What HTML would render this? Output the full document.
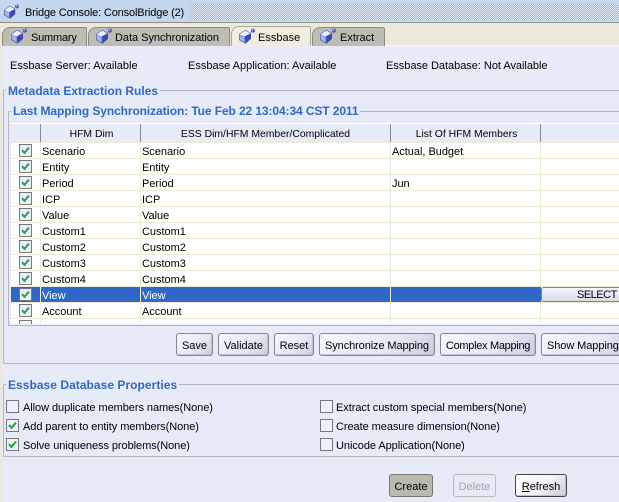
<!DOCTYPE html>
<html><head><meta charset="utf-8">
<style>
html,body{margin:0;padding:0;width:619px;height:502px;overflow:hidden;background:#e6ebf7;font-family:"Liberation Sans",sans-serif;font-size:11px;color:#000}
div,span{position:absolute;box-sizing:border-box;white-space:nowrap}
svg{position:absolute;overflow:visible}
.t{line-height:14px;height:14px}
.r{letter-spacing:-.03px}
.l{letter-spacing:-.06px}
.tab{top:27px;height:19px;background:#bdbdb4;border:1px solid #8a8a84;border-bottom:none;border-radius:8px 2px 0 0}
.h{color:#3068c8;font-weight:bold;font-size:12px;line-height:14px;height:14px;background:#e6ebf7;padding:0 2px}
.g{border:1px solid #b4b6b9;border-radius:1px}
.btn{top:333px;height:23px;border:1px solid #86868e;border-radius:3px;background:linear-gradient(135deg,#f4f6fc 0%,#e6e9f4 60%,#c8cbda 100%);text-align:center;line-height:24px;box-shadow:inset -1px -1px 0 #c0c2cf}
.cb{width:13px;height:13px;border:1px solid #77777f;background:#eef0f9}
.row{left:11px;width:608px;height:16px;background:#fff;border-bottom:1px solid #efe9d6}
.vl{width:1px;background:#efe9d6;top:143px;height:180px}
.hc{top:124px;height:19px;border-right:1px solid #8a8a8a;text-align:center;line-height:21px;background:#e6ebf7;font-size:10.4px}
</style></head><body>
<svg width="0" height="0" style="position:absolute"><defs>
<symbol id="cube" viewBox="0 0 15 15">
<path d="M0 6 L6 2 L11 5 L11 10 L6 14.5 L0 11Z" fill="#7a86dc" stroke="#4a52a8" stroke-width=".5"/>
<path d="M.5 6 L6 2.5 L10.5 5 L5 8Z" fill="#eef0ff"/>
<path d="M5.5 8 L11 5 L11 10 L6 14.5Z" fill="#3b48b4"/>
<path d="M1 7 L5 8.5 L5 13 L1 11Z" fill="#a8b4f0"/>
<circle cx="13" cy="2.5" r="1.9" fill="#4658c0"/><circle cx="12.6" cy="2" r=".7" fill="#d8defc"/>
</symbol>
<symbol id="chk" viewBox="0 0 9 8"><path d="M1 3.6 L3.5 6.4 L8 1" fill="none" stroke="#24a83c" stroke-width="2.1"/></symbol>
</defs></svg>

<div style="left:0;top:0;width:619px;height:22px;background:#c5d6ef"></div>
<div style="left:190px;top:4px;width:429px;height:16px;background:repeating-conic-gradient(#9db8e2 0 25%,#dfe8f6 0 50%) 0 0/2px 2px"></div>
<div style="left:0;top:22px;width:619px;height:1px;background:#8f8f8a"></div>
<svg style="left:4px;top:4px" width="15" height="15"><use href="#cube"/></svg>
<div class="t" style="left:25px;top:6px;letter-spacing:-.15px">Bridge Console: ConsolBridge (2)</div>

<div style="left:0;top:23px;width:619px;height:23px;background:#ede9da"></div>
<div style="left:0;top:45px;width:619px;height:1px;background:#fbfaf1"></div>
<div style="left:0;top:46px;width:2px;height:456px;background:#ede9da"></div>

<div class="tab" style="left:2px;width:85px"></div>
<svg style="left:11px;top:28px" width="16" height="16"><use href="#cube"/></svg>
<div class="t" style="left:31px;top:31px;letter-spacing:-.2px">Summary</div>
<div class="tab" style="left:88px;width:142px"></div>
<svg style="left:96px;top:28px" width="16" height="16"><use href="#cube"/></svg>
<div class="t" style="left:115px;top:31px;letter-spacing:-.03px">Data Synchronization</div>
<div class="tab" style="left:231px;top:26px;width:80px;height:20px;background:#f0eddf;border-color:#a8a89f"></div>
<svg style="left:239px;top:28px" width="16" height="16"><use href="#cube"/></svg>
<div class="t" style="left:258px;top:31px">Essbase</div>
<div class="tab" style="left:312px;width:73px"></div>
<svg style="left:320px;top:28px" width="16" height="16"><use href="#cube"/></svg>
<div class="t" style="left:340px;top:31px">Extract</div>

<div class="t" style="left:10px;top:59px">Essbase Server: Available</div>
<div class="t" style="left:188px;top:59px">Essbase Application: Available</div>
<div class="t" style="left:386px;top:59px;letter-spacing:-.03px">Essbase Database: Not Available</div>

<div class="g" style="left:3px;top:90px;width:640px;height:274px"></div>
<div class="h" style="left:6px;top:84px">Metadata Extraction Rules</div>
<div class="g" style="left:8px;top:111px;width:640px;height:215px"></div>
<div class="h" style="left:11px;top:104px;letter-spacing:-.1px">Last Mapping Synchronization: Tue Feb 22 13:04:34 CST 2011</div>

<div style="left:11px;top:123px;width:608px;height:1px;background:#fff"></div>
<div class="hc" style="left:11px;width:30px"></div>
<div class="hc" style="left:41px;width:100px;padding-left:2px">HFM Dim</div>
<div class="hc" style="left:141px;width:250px">ESS Dim/HFM Member/Complicated</div>
<div class="hc" style="left:391px;width:150px;padding-left:2px">List Of HFM Members</div>
<div class="hc" style="left:541px;width:78px;border-right:none"></div>
<div style="left:11px;top:142px;width:608px;height:1px;background:#efe9d6"></div>

<div class="row" style="top:143px"></div>
<div class="row" style="top:159px"></div>
<div class="row" style="top:175px"></div>
<div class="row" style="top:191px"></div>
<div class="row" style="top:207px"></div>
<div class="row" style="top:223px"></div>
<div class="row" style="top:239px"></div>
<div class="row" style="top:255px"></div>
<div class="row" style="top:271px"></div>
<div class="row" style="top:287px"></div>
<div class="row" style="top:303px"></div>
<div class="row" style="top:319px;height:5px;border:none"></div>

<div class="vl" style="left:40px"></div>
<div class="vl" style="left:140px"></div>
<div class="vl" style="left:390px"></div>
<div class="vl" style="left:540px"></div>

<div style="left:11px;top:287px;width:530px;height:15px;background:#3068c8"></div>
<div style="left:40px;top:287px;width:1px;height:15px;background:#efe9d6"></div>
<div style="left:140px;top:287px;width:1px;height:15px;background:#efe9d6"></div>
<div style="left:390px;top:287px;width:1px;height:15px;background:#efe9d6"></div>

<div class="cb" style="left:19px;top:144px"><svg style="left:1px;top:1px" width="9" height="9"><use href="#chk"/></svg></div>
<div class="cb" style="left:19px;top:160px"><svg style="left:1px;top:1px" width="9" height="9"><use href="#chk"/></svg></div>
<div class="cb" style="left:19px;top:176px"><svg style="left:1px;top:1px" width="9" height="9"><use href="#chk"/></svg></div>
<div class="cb" style="left:19px;top:192px"><svg style="left:1px;top:1px" width="9" height="9"><use href="#chk"/></svg></div>
<div class="cb" style="left:19px;top:208px"><svg style="left:1px;top:1px" width="9" height="9"><use href="#chk"/></svg></div>
<div class="cb" style="left:19px;top:224px"><svg style="left:1px;top:1px" width="9" height="9"><use href="#chk"/></svg></div>
<div class="cb" style="left:19px;top:240px"><svg style="left:1px;top:1px" width="9" height="9"><use href="#chk"/></svg></div>
<div class="cb" style="left:19px;top:256px"><svg style="left:1px;top:1px" width="9" height="9"><use href="#chk"/></svg></div>
<div class="cb" style="left:19px;top:272px"><svg style="left:1px;top:1px" width="9" height="9"><use href="#chk"/></svg></div>
<div class="cb" style="left:19px;top:288px"><svg style="left:1px;top:1px" width="9" height="9"><use href="#chk"/></svg></div>
<div class="cb" style="left:19px;top:304px"><svg style="left:1px;top:1px" width="9" height="9"><use href="#chk"/></svg></div>
<div style="left:19px;top:320px;width:13px;height:4px;border:1px solid #77777f;border-bottom:none;background:#f4f5fb"></div>

<div class="t r" style="left:42px;top:145px">Scenario</div><div class="t r" style="left:142px;top:145px">Scenario</div><div class="t r" style="left:392px;top:145px">Actual, Budget</div>
<div class="t r" style="left:42px;top:161px">Entity</div><div class="t r" style="left:142px;top:161px">Entity</div>
<div class="t r" style="left:42px;top:177px">Period</div><div class="t r" style="left:142px;top:177px">Period</div><div class="t r" style="left:392px;top:177px">Jun</div>
<div class="t r" style="left:42px;top:193px">ICP</div><div class="t r" style="left:142px;top:193px">ICP</div>
<div class="t r" style="left:42px;top:209px">Value</div><div class="t r" style="left:142px;top:209px">Value</div>
<div class="t r" style="left:42px;top:225px">Custom1</div><div class="t r" style="left:142px;top:225px">Custom1</div>
<div class="t r" style="left:42px;top:241px">Custom2</div><div class="t r" style="left:142px;top:241px">Custom2</div>
<div class="t r" style="left:42px;top:257px">Custom3</div><div class="t r" style="left:142px;top:257px">Custom3</div>
<div class="t r" style="left:42px;top:273px">Custom4</div><div class="t r" style="left:142px;top:273px">Custom4</div>
<div class="t r" style="left:42px;top:289px;color:#fff">View</div><div class="t r" style="left:142px;top:289px;color:#fff">View</div>
<div class="t r" style="left:42px;top:305px">Account</div><div class="t r" style="left:142px;top:305px">Account</div>

<div style="left:541px;top:287px;width:90px;height:15px;border:1px solid #808088;border-radius:3px;background:linear-gradient(#f4f6fb,#d8dcea);line-height:15px;padding-left:35px;letter-spacing:-.5px">SELECT *</div>

<div class="btn" style="left:176px;width:37px">Save</div>
<div class="btn" style="left:218px;width:51px">Validate</div>
<div class="btn" style="left:274px;width:40px">Reset</div>
<div class="btn" style="left:319px;width:116px;letter-spacing:-.1px">Synchronize Mapping</div>
<div class="btn" style="left:440px;width:96px;letter-spacing:-.3px">Complex Mapping</div>
<div class="btn" style="left:541px;width:90px;text-align:left;padding-left:5px;letter-spacing:-.08px">Show Mapping</div>

<div class="g" style="left:3px;top:384px;width:640px;height:73px"></div>
<div class="h" style="left:6px;top:378px;letter-spacing:.04px">Essbase Database Properties</div>

<div class="cb" style="left:6px;top:400px"></div>
<div class="t l" style="left:23px;top:401px">Allow duplicate members names(None)</div>
<div class="cb" style="left:6px;top:419px"><svg style="left:1px;top:1px" width="9" height="9"><use href="#chk"/></svg></div>
<div class="t l" style="left:23px;top:420px">Add parent to entity members(None)</div>
<div class="cb" style="left:6px;top:438px"><svg style="left:1px;top:1px" width="9" height="9"><use href="#chk"/></svg></div>
<div class="t l" style="left:23px;top:439px">Solve uniqueness problems(None)</div>
<div class="cb" style="left:320px;top:400px"></div>
<div class="t l" style="left:336px;top:401px">Extract custom special members(None)</div>
<div class="cb" style="left:320px;top:419px"></div>
<div class="t l" style="left:336px;top:420px">Create measure dimension(None)</div>
<div class="cb" style="left:320px;top:438px"></div>
<div class="t l" style="left:336px;top:439px">Unicode Application(None)</div>

<div class="btn" style="left:389px;top:474px;width:44px;background:#b8baaf;box-shadow:none;border-color:#77776f">Create</div>
<div class="btn" style="left:453px;top:474px;width:43px;background:#e6ebf7;box-shadow:none;border-color:#b8b8b4;color:#a5a8a8">Delete</div>
<div class="btn" style="left:515px;top:474px;width:52px;border-color:#444;background:linear-gradient(135deg,#fff 0%,#f2f3f8 55%,#c6c8d6 100%)"><u>R</u>efresh</div>
</body></html>
